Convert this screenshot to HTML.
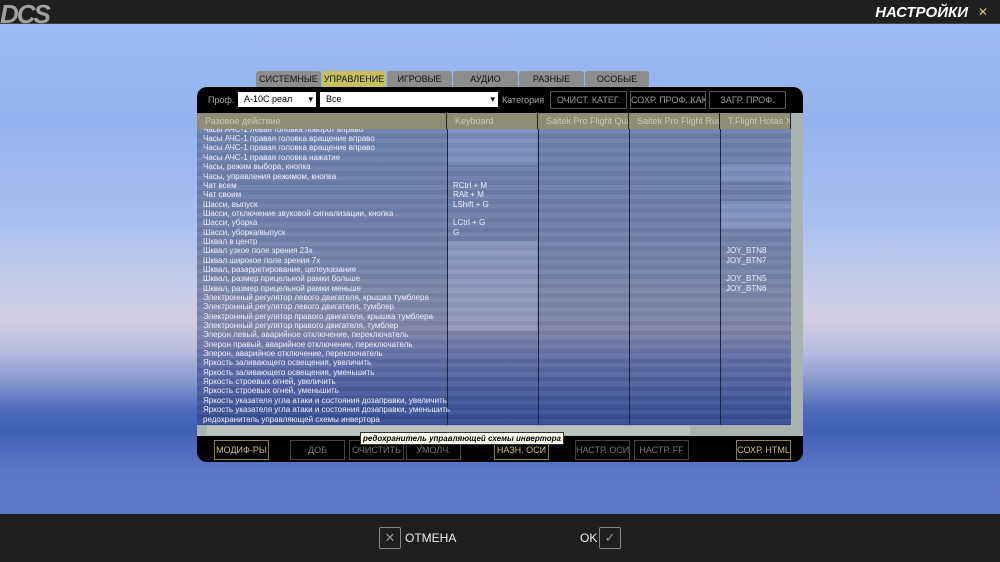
<!DOCTYPE html>
<html><head><meta charset="utf-8"><style>
*{margin:0;padding:0;box-sizing:border-box}
body{width:1000px;height:562px;overflow:hidden;position:relative;font-family:"Liberation Sans",sans-serif;
background:linear-gradient(180deg,#9dbcf2 0px,#93b3f0 120px,#a9bff0 220px,#c6cde9 290px,#d2cce0 320px,#b9bde0 350px,#8a9ad0 380px,#4d6bbb 410px,#3f60b4 430px,#5a76c6 470px,#5d78c8 514px)}
div{white-space:nowrap}
.top{position:absolute;left:0;top:0;width:1000px;height:24px;background:#1f1f1f;border-bottom:1px solid #444}
.logo{position:absolute;left:0;top:-1px;font:italic bold 26px "Liberation Sans",sans-serif;color:#a0a0a0;letter-spacing:-2px}
.title{position:absolute;right:32px;top:4px;font:italic bold 15px "Liberation Sans",sans-serif;color:#fff}
.x{position:absolute;right:12px;top:5px;color:#d8c860;font-size:12px}
.bot{position:absolute;left:0;top:514px;width:1000px;height:48px;background:#1e1e1e}
.bbox{position:absolute;top:527px;width:22px;height:22px;border:1px solid #888;border-radius:2px;color:#999;font-size:13px;text-align:center;line-height:20px}
.blab{position:absolute;top:531px;color:#eee;font:12px "Liberation Sans",sans-serif}
.tabs{position:absolute;left:256px;top:71px}
.tab{position:absolute;top:0;height:16px;background:#8d8d8d;color:#111;font-size:9px;text-align:center;line-height:16px;border-radius:3px 3px 0 0}
.panel{position:absolute;left:197px;top:87px;width:606px;height:375px;background:#000;border-radius:10px}
.lbl{position:absolute;color:#aaa;font-size:9px}
.sel{position:absolute;top:92px;height:15px;background:#fff;color:#000;font-size:9px;line-height:15px;padding-left:6px}
.sel:after{content:"▾";position:absolute;right:3px;top:0;font-size:9px}
.btn{position:absolute;height:18px;border:1px solid #555;color:#999;font-size:9px;text-align:center;line-height:16px;overflow:hidden}
.hdr{position:absolute;top:113px;height:16px;background:#8f8e74;color:#ccc9b0;font-size:9px;line-height:16px;padding-left:8px;border-right:1px solid #222;overflow:hidden}
.body{position:absolute;left:197px;top:129px;width:594px;height:296px;overflow:hidden;
background:linear-gradient(180deg,#6b7fab 0,#6d7ea8 100px,#7a86aa 180px,#7d84a8 200px,#5e6da4 230px,#3d5196 280px,#34498f 296px)}
.stripes{position:absolute;inset:0;background:repeating-linear-gradient(180deg,rgba(255,255,255,.05) 0 4.7px,rgba(0,0,0,.03) 4.7px 9.36px)}
.col{position:absolute;top:0;height:296px;border-left:1px solid #1c2440}
.row{position:absolute;left:6px;color:#eef;font-size:8px;line-height:9px}
.kb{position:absolute;color:#eef;font-size:8px;line-height:9px}
.vs{position:absolute;left:791px;top:113px;width:12px;height:312px;background:#a8b4b0}
.hs{position:absolute;left:197px;top:425px;width:606px;height:11px;background:#a8b4b0;overflow:hidden}
.bb{position:absolute;top:440px;height:20px;border:1px solid #444;color:#777;font-size:9px;text-align:center;line-height:18px;overflow:hidden}
.y{border-color:#8a8240;color:#c8c080}
.tip{position:absolute;left:360px;top:432px;background:#fffff0;color:#000;border:1px solid #333;font:italic bold 8px "Liberation Sans",sans-serif;padding:1px 2px}
</style></head><body>
<div class="top"><div class="logo">DCS</div><div class="title">НАСТРОЙКИ</div><div class="x">✕</div></div>

<div class="tabs">
<div class="tab" style="left:0;width:65px">СИСТЕМНЫЕ</div>
<div class="tab" style="left:66px;width:64px;background:#c8c060">УПРАВЛЕНИЕ</div>
<div class="tab" style="left:131px;width:65px">ИГРОВЫЕ</div>
<div class="tab" style="left:197px;width:65px">АУДИО</div>
<div class="tab" style="left:263px;width:65px">РАЗНЫЕ</div>
<div class="tab" style="left:329px;width:64px">ОСОБЫЕ</div>
</div>

<div class="panel"></div>
<div class="lbl" style="left:208px;top:95px">Проф.</div>
<div class="sel" style="left:238px;width:78px">A-10C реал</div>
<div class="sel" style="left:320px;width:178px">Все</div>
<div class="lbl" style="left:502px;top:95px">Категория</div>
<div class="btn" style="left:550px;top:91px;width:77px">ОЧИСТ. КАТЕГ.</div>
<div class="btn" style="left:630px;top:91px;width:76px">СОХР. ПРОФ. КАК</div>
<div class="btn" style="left:709px;top:91px;width:77px">ЗАГР. ПРОФ.</div>

<div class="hdr" style="left:197px;width:250px">Разовое действие</div>
<div class="hdr" style="left:447px;width:91px">Keyboard</div>
<div class="hdr" style="left:538px;width:91px">Saitek Pro Flight Quadrant</div>
<div class="hdr" style="left:629px;width:91px">Saitek Pro Flight Rudder</div>
<div class="hdr" style="left:720px;width:71px">T.Flight Hotas X</div>

<div class="body">
<div style="position:absolute;left:250px;top:0;width:90px;height:36px;background:rgba(160,180,230,.3)"></div>
<div style="position:absolute;left:250px;top:112px;width:90px;height:90px;background:rgba(190,200,240,.3)"></div>
<div style="position:absolute;left:523px;top:35px;width:71px;height:18px;background:rgba(160,180,230,.3)"></div>
<div style="position:absolute;left:523px;top:72px;width:71px;height:28px;background:rgba(160,180,230,.35)"></div>
<div class="stripes"></div>
<div class="col" style="left:250px"></div><div class="col" style="left:341px"></div><div class="col" style="left:432px"></div><div class="col" style="left:523px"></div>
<div class="row" style="top:-4px">Часы АЧС-1 левая головка поворот вправо</div>
<div class="row" style="top:5px">Часы АЧС-1 правая головка вращение вправо</div>
<div class="row" style="top:14px">Часы АЧС-1 правая головка вращение вправо</div>
<div class="row" style="top:24px">Часы АЧС-1 правая головка нажатие</div>
<div class="row" style="top:33px">Часы, режим выбора, кнопка</div>
<div class="row" style="top:43px">Часы, управления режимом, кнопка</div>
<div class="row" style="top:52px">Чат всем</div>
<div class="row" style="top:61px">Чат своим</div>
<div class="row" style="top:71px">Шасси, выпуск</div>
<div class="row" style="top:80px">Шасси, отключение звуковой сигнализации, кнопка</div>
<div class="row" style="top:89px">Шасси, уборка</div>
<div class="row" style="top:99px">Шасси, уборка/выпуск</div>
<div class="row" style="top:108px">Шквал в центр</div>
<div class="row" style="top:117px">Шквал узкое поле зрения 23х</div>
<div class="row" style="top:127px">Шквал широкое поле зрения 7х</div>
<div class="row" style="top:136px">Шквал, разарретирование, целеуказание</div>
<div class="row" style="top:145px">Шквал, размер прицельной рамки больше</div>
<div class="row" style="top:155px">Шквал, размер прицельной рамки меньше</div>
<div class="row" style="top:164px">Электронный регулятор левого двигателя, крышка тумблера</div>
<div class="row" style="top:173px">Электронный регулятор левого двигателя, тумблер</div>
<div class="row" style="top:183px">Электронный регулятор правого двигателя, крышка тумблера</div>
<div class="row" style="top:192px">Электронный регулятор правого двигателя, тумблер</div>
<div class="row" style="top:201px">Элерон левый, аварийное отключение, переключатель</div>
<div class="row" style="top:211px">Элерон правый, аварийное отключение, переключатель</div>
<div class="row" style="top:220px">Элерон, аварийное отключение, переключатель</div>
<div class="row" style="top:229px">Яркость заливающего освещения, увеличить</div>
<div class="row" style="top:239px">Яркость заливающего освещения, уменьшить</div>
<div class="row" style="top:248px">Яркость строевых огней, увеличить</div>
<div class="row" style="top:257px">Яркость строевых огней, уменьшить</div>
<div class="row" style="top:267px">Яркость указателя угла атаки и состояния дозаправки, увеличить</div>
<div class="row" style="top:276px">Яркость указателя угла атаки и состояния дозаправки, уменьшить</div>
<div class="row" style="top:286px">редохранитель управляющей схемы инвертора</div>
<div class="kb" style="left:256px;top:52px">RCtrl + M</div>
<div class="kb" style="left:256px;top:61px">RAlt + M</div>
<div class="kb" style="left:256px;top:71px">LShift + G</div>
<div class="kb" style="left:256px;top:89px">LCtrl + G</div>
<div class="kb" style="left:256px;top:99px">G</div>
<div class="kb" style="left:529px;top:117px">JOY_BTN8</div>
<div class="kb" style="left:529px;top:127px">JOY_BTN7</div>
<div class="kb" style="left:529px;top:145px">JOY_BTN5</div>
<div class="kb" style="left:529px;top:155px">JOY_BTN6</div>
</div>
<div class="vs"></div>
<div class="hs"><div style="position:absolute;left:10px;top:1px;width:483px;height:9px;background:#b8c4c0"></div></div>

<div class="bb y" style="left:214px;width:55px">МОДИФ-РЫ</div>
<div class="bb" style="left:290px;width:55px">ДОБ</div>
<div class="bb" style="left:349px;width:55px">ОЧИСТИТЬ</div>
<div class="bb" style="left:406px;width:55px">УМОЛЧ.</div>
<div class="bb y" style="left:494px;width:55px">НАЗН. ОСИ</div>
<div class="bb" style="left:575px;width:55px">НАСТР. ОСИ</div>
<div class="bb" style="left:634px;width:55px">НАСТР. FF</div>
<div class="bb y" style="left:736px;width:55px">СОХР. HTML</div>
<div class="tip">редохранитель управляющей схемы инвертора</div>

<div class="bot"></div>
<div class="bbox" style="left:379px">✕</div><div class="blab" style="left:405px">ОТМЕНА</div>
<div class="blab" style="left:580px">OK</div><div class="bbox" style="left:599px">✓</div>
</body></html>
